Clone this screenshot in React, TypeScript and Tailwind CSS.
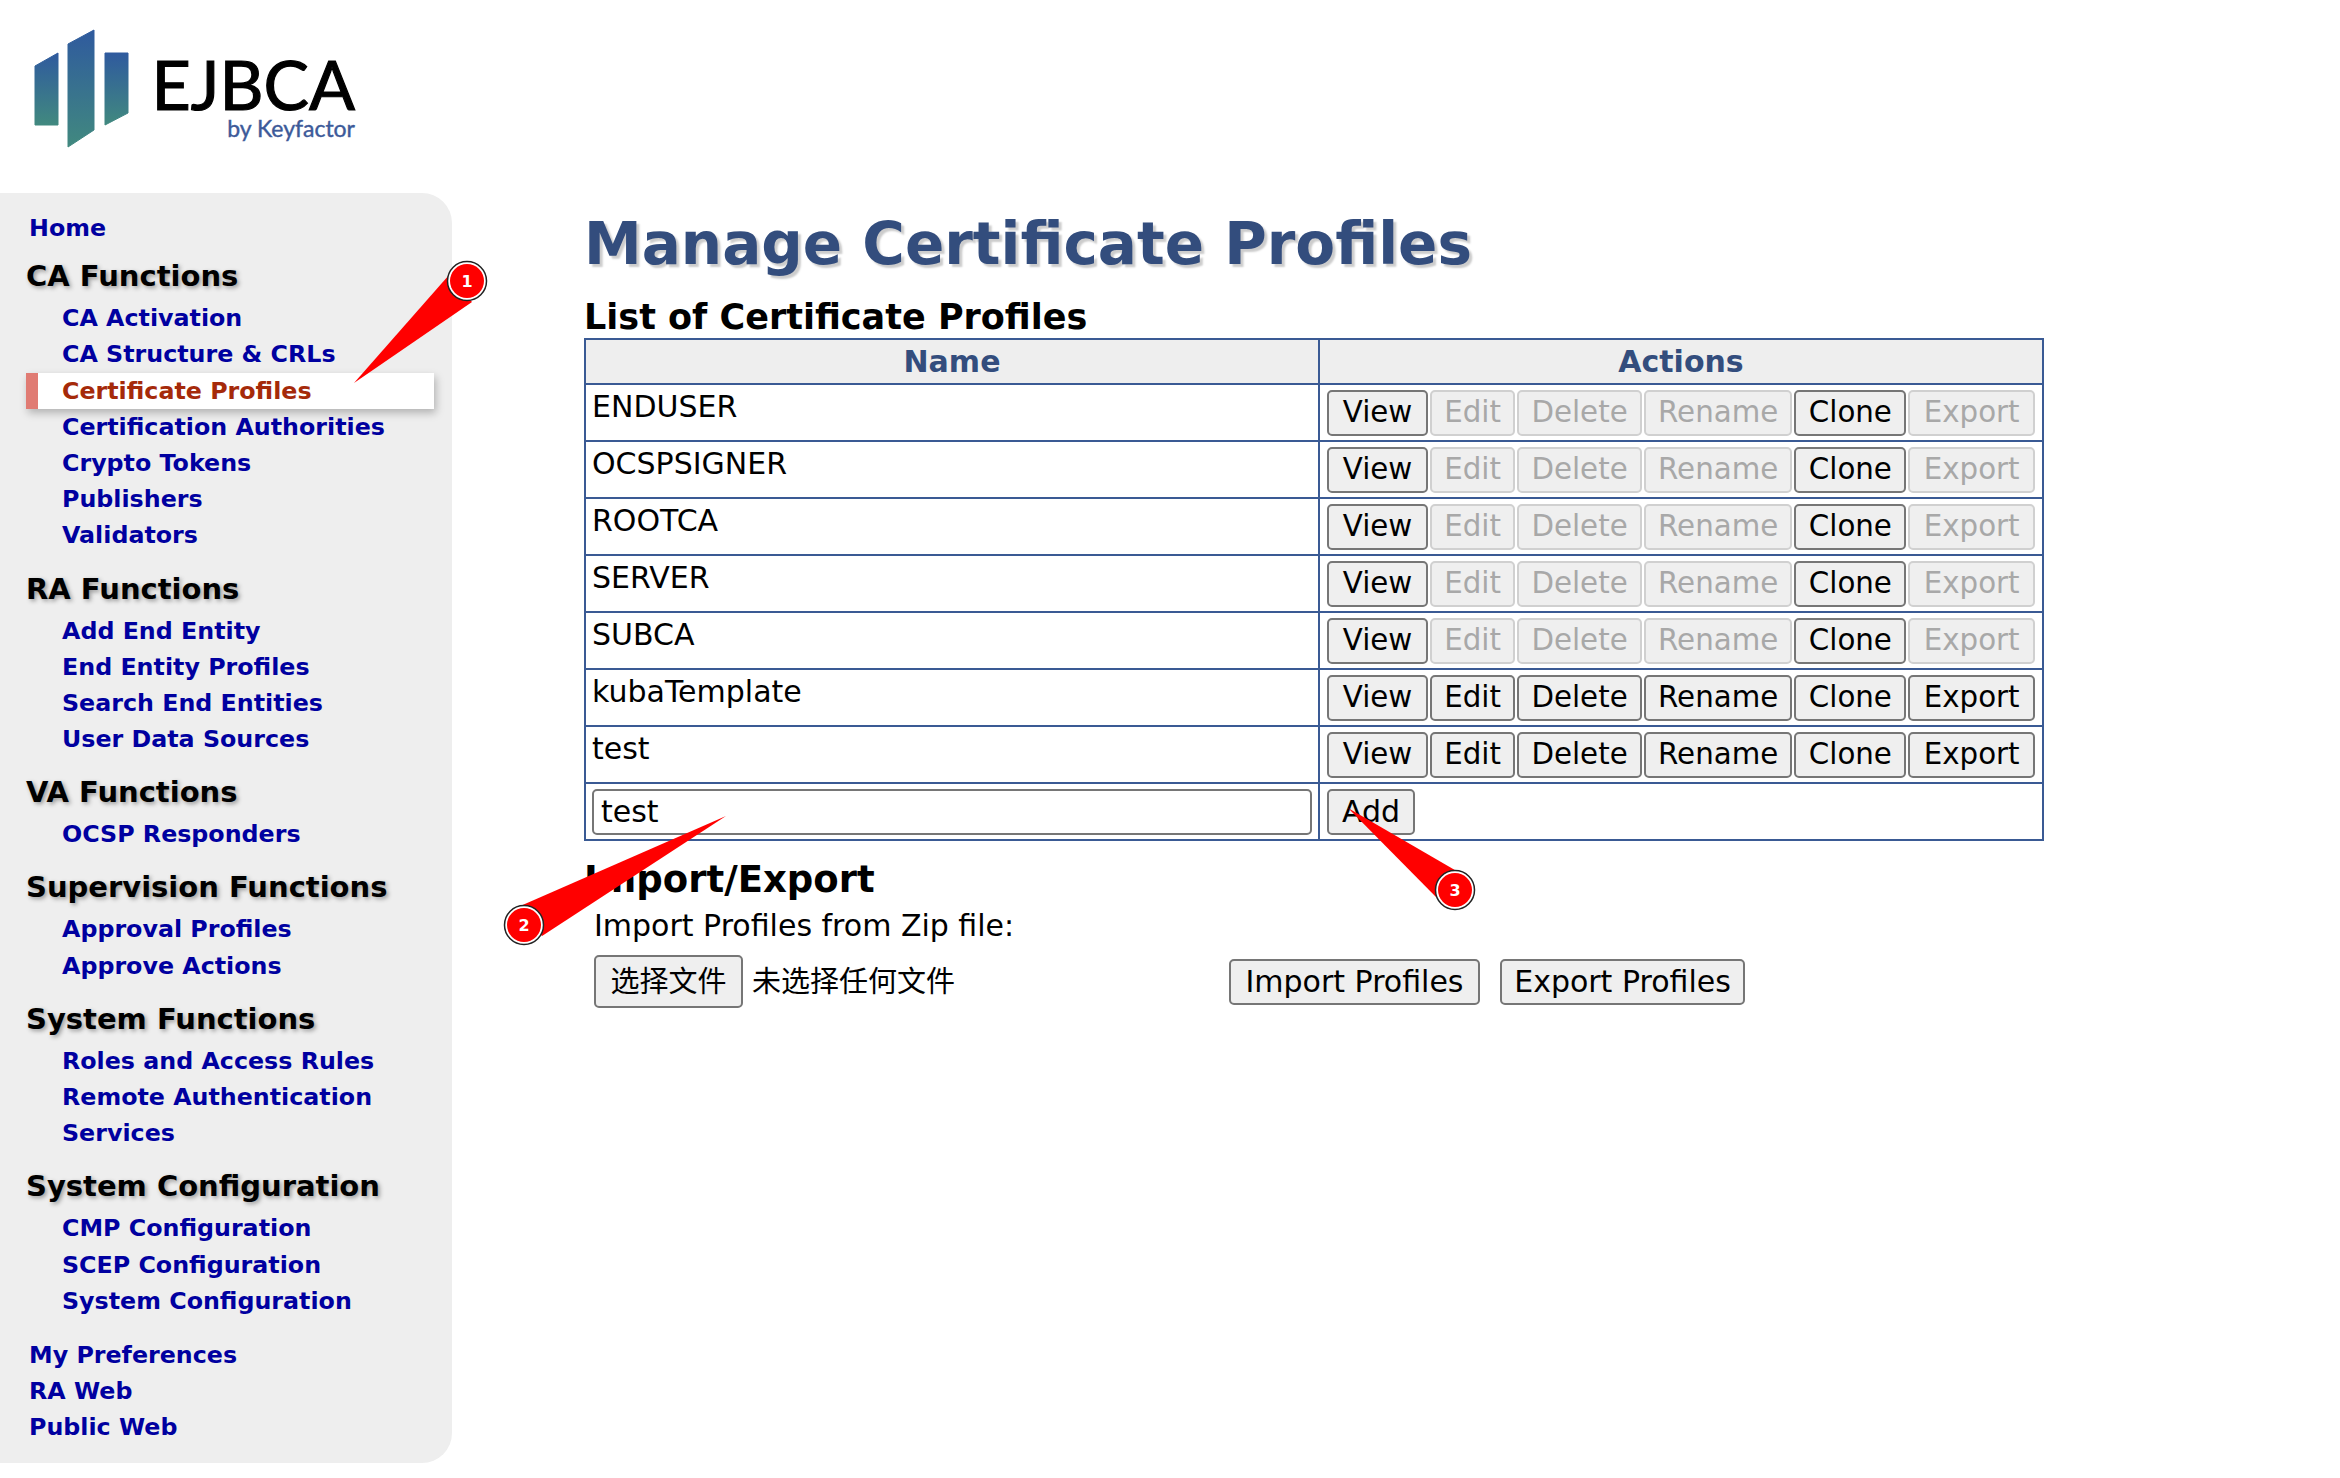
const menu: { title?: string; gap: string; links: string[] }[] = [
    { gap: "mt-[8px]", links: ["Home"] },
    { title: "CA Functions", gap: "mt-[7px]", links: ["CA Activation", "CA Structure & CRLs", "Certificate Profiles", "Certification Authorities", "Crypto Tokens", "Publishers", "Validators"] },
    { title: "RA Functions", gap: "mt-[12px]", links: ["Add End Entity", "End Entity Profiles", "Search End Entities", "User Data Sources"] },
    { title: "VA Functions", gap: "mt-[12px]", links: ["OCSP Responders"] },
    { title: "Supervision Functions", gap: "mt-[12px]", links: ["Approval Profiles", "Approve Actions"] },
    { title: "System Functions", gap: "mt-[12px]", links: ["Roles and Access Rules", "Remote Authentication", "Services"] },
    { title: "System Configuration", gap: "mt-[12px]", links: ["CMP Configuration", "SCEP Configuration", "System Configuration"] },
    { gap: "mt-[18px]", links: ["My Preferences", "RA Web", "Public Web"] },
];

const profiles = [
    { name: "ENDUSER", fixed: true },
    { name: "OCSPSIGNER", fixed: true },
    { name: "ROOTCA", fixed: true },
    { name: "SERVER", fixed: true },
    { name: "SUBCA", fixed: true },
    { name: "kubaTemplate", fixed: false },
    { name: "test", fixed: false },
];

function Logo() {
    return (
        <div className="h-[193px] relative">
            <svg width="140" height="160" viewBox="0 0 140 160" className="absolute left-0 top-0">
                <defs>
                    <linearGradient id="bar" x1="0" y1="0" x2="0" y2="1">
                        <stop offset="0" stopColor="#2f5a9e" />
                        <stop offset="1" stopColor="#41897f" />
                    </linearGradient>
                </defs>
                <path d="M35 66 L58 53 V125 H35 Z" fill="url(#bar)" stroke="url(#bar)" strokeWidth="1" strokeLinejoin="round" />
                <path d="M68 44 L94 30 V130 L68 147 Z" fill="url(#bar)" stroke="url(#bar)" strokeWidth="1" strokeLinejoin="round" />
                <path d="M105 53 H128 V113 L105 125 Z" fill="url(#bar)" stroke="url(#bar)" strokeWidth="1" strokeLinejoin="round" />
            </svg>
            <div className="absolute left-[150px] top-[49px] w-[205px] text-right font-['Lato',sans-serif]">
                <div className="text-[68px] leading-[70px] text-black [-webkit-text-stroke:1.2px_#000]">EJBCA</div>
                <div className="text-[23px] leading-[18px] text-[#3d5a99] [-webkit-text-stroke:0.4px_#3d5a99]">by Keyfactor</div>
            </div>
        </div>
    );
}

function Sidebar() {
    return (
        <nav className="w-[452px] h-[1270px] bg-[#eeeeee] rounded-r-[30px] pt-[9px] shrink-0 font-['DejaVu_Sans',sans-serif] font-bold">
            {menu.map((group, i) => (
                <div key={i} className={group.gap}>
                    {group.title && (
                        <h3 className="pl-[26px] text-[29px] leading-[47px] text-black [text-shadow:2px_2px_4px_#999]">{group.title}</h3>
                    )}
                    {group.links.map((link) => {
                        const active = link === "Certificate Profiles";
                        return (
                            <a
                                key={link}
                                className={
                                    active
                                        ? "block w-[408px] ml-[26px] pl-[24px] h-[36.2px] leading-[36px] text-[23.75px] bg-white text-[#a52a0a] border-l-[12px] border-[#e07b73] shadow-[2px_4px_8px_rgba(0,0,0,0.25)]"
                                        : group.title
                                          ? "block pl-[62px] h-[36.2px] leading-[36px] text-[23.75px] text-[#0000a0]"
                                          : "block pl-[29px] h-[36.2px] leading-[36px] text-[23.75px] text-[#0000a0]"
                                }
                            >
                                {link}
                            </a>
                        );
                    })}
                </div>
            ))}
        </nav>
    );
}

function Btn({ label, off, w }: { label: string; off?: boolean; w: string }) {
    return (
        <button
            disabled={off}
            className={
                off
                    ? `${w} h-[46px] pt-[1px] rounded-[5px] border-2 border-[#d0d0d0] bg-[#efefef] text-[#a8a8a8] leading-none`
                    : `${w} h-[46px] pt-[1px] rounded-[5px] border-2 border-[#767676] bg-[#efefef] text-black leading-none`
            }
        >
            {label}
        </button>
    );
}

function ProfileTable() {
    return (
        <table className="w-[1460px] table-fixed border-collapse border-2 border-[#3a5a94] text-[30px]">
            <thead>
                <tr className="h-[45px] bg-[#eeeeee] text-[#334d7d] font-bold">
                    <th className="w-[734px] border-2 border-[#3a5a94] p-0 leading-[40px]">Name</th>
                    <th className="border-2 border-[#3a5a94] p-0 leading-[40px]">Actions</th>
                </tr>
            </thead>
            <tbody>
                {profiles.map((p) => (
                    <tr key={p.name} className="h-[57px]">
                        <td className="border-2 border-[#3a5a94] align-top pl-[6px] leading-[44px]">{p.name}</td>
                        <td className="border-2 border-[#3a5a94] px-[7px] py-0">
                            <div className="flex gap-[2px] text-[29.3px]">
                                <Btn label="View" w="w-[102px]" />
                                <Btn label="Edit" off={p.fixed} w="w-[86px]" />
                                <Btn label="Delete" off={p.fixed} w="w-[126px]" />
                                <Btn label="Rename" off={p.fixed} w="w-[150px]" />
                                <Btn label="Clone" w="w-[113px]" />
                                <Btn label="Export" off={p.fixed} w="w-[128px]" />
                            </div>
                        </td>
                    </tr>
                ))}
                <tr className="h-[57px]">
                    <td className="border-2 border-[#3a5a94] pl-[6px] pr-[6px]">
                        <input
                            readOnly
                            value="test"
                            className="block w-full h-[46px] px-[7px] rounded-[5px] border-2 border-[#767676] bg-white text-[30px] text-black"
                        />
                    </td>
                    <td className="border-2 border-[#3a5a94] px-[7px]">
                        <Btn label="Add" w="w-[88px] block" />
                    </td>
                </tr>
            </tbody>
        </table>
    );
}

function Badge({ cx, cy, n }: { cx: number; cy: number; n: number }) {
    return (
        <g>
            <circle cx={cx} cy={cy} r="19.5" fill="#fff" stroke="#222" strokeWidth="1.5" />
            <circle cx={cx} cy={cy} r="17" fill="#ff0000" />
            <text x={cx} y={cy + 6} textAnchor="middle" fontSize="16" fontWeight="700" fill="#fff" fontFamily="'DejaVu Sans', sans-serif">
                {n}
            </text>
        </g>
    );
}

function Annotations() {
    return (
        <svg width="2340" height="1478" className="absolute left-0 top-0 pointer-events-none">
            <path d="M354 383 L449 275 L472 302 Z" fill="#ff0000" />
            <Badge cx={467} cy={281} n={1} />
            <path d="M726 816 L518 907 L542 936 Z" fill="#ff0000" />
            <Badge cx={524} cy={925} n={2} />
            <path d="M1348 808 L1460 873 L1436 897 Z" fill="#ff0000" />
            <Badge cx={1455} cy={890} n={3} />
        </svg>
    );
}

export default function App() {
    return (
        <div className="relative w-[2340px] h-[1478px] bg-white overflow-hidden font-['DejaVu_Sans',sans-serif] text-black">
            <Logo />
            <div className="flex">
                <Sidebar />
                <main className="pl-[132px] pt-[13px]">
                    <h1 className="text-[58px] leading-[76px] font-bold text-[#334d7d] [text-shadow:3px_3px_2px_#cccccc]">
                        Manage Certificate Profiles
                    </h1>
                    <h2 className="mt-[15px] text-[35px] leading-[41px] font-bold">List of Certificate Profiles</h2>
                    <ProfileTable />
                    <h2 className="mt-[16px] text-[37px] leading-[46px] font-bold">Import/Export</h2>
                    <div className="pl-[10px]">
                        <div className="mt-[1px] text-[30px] leading-[44px]">Import Profiles from Zip file:</div>
                        <div className="mt-[7px] flex items-center text-[30px]">
                            <button className="w-[149px] h-[53px] pt-[2px] rounded-[5px] border-2 border-[#767676] bg-[#efefef] text-[29px] font-['DejaVu_Sans','Noto_Sans_CJK_SC',sans-serif]">
                                选择文件
                            </button>
                            <span className="ml-[9px] w-[477px] pt-[3px] text-[29px] font-['DejaVu_Sans','Noto_Sans_CJK_SC',sans-serif]">未选择任何文件</span>
                            <Btn label="Import Profiles" w="w-[251px]" />
                            <span className="w-[20px]" />
                            <Btn label="Export Profiles" w="w-[245px]" />
                        </div>
                    </div>
                </main>
            </div>
            <Annotations />
        </div>
    );
}
